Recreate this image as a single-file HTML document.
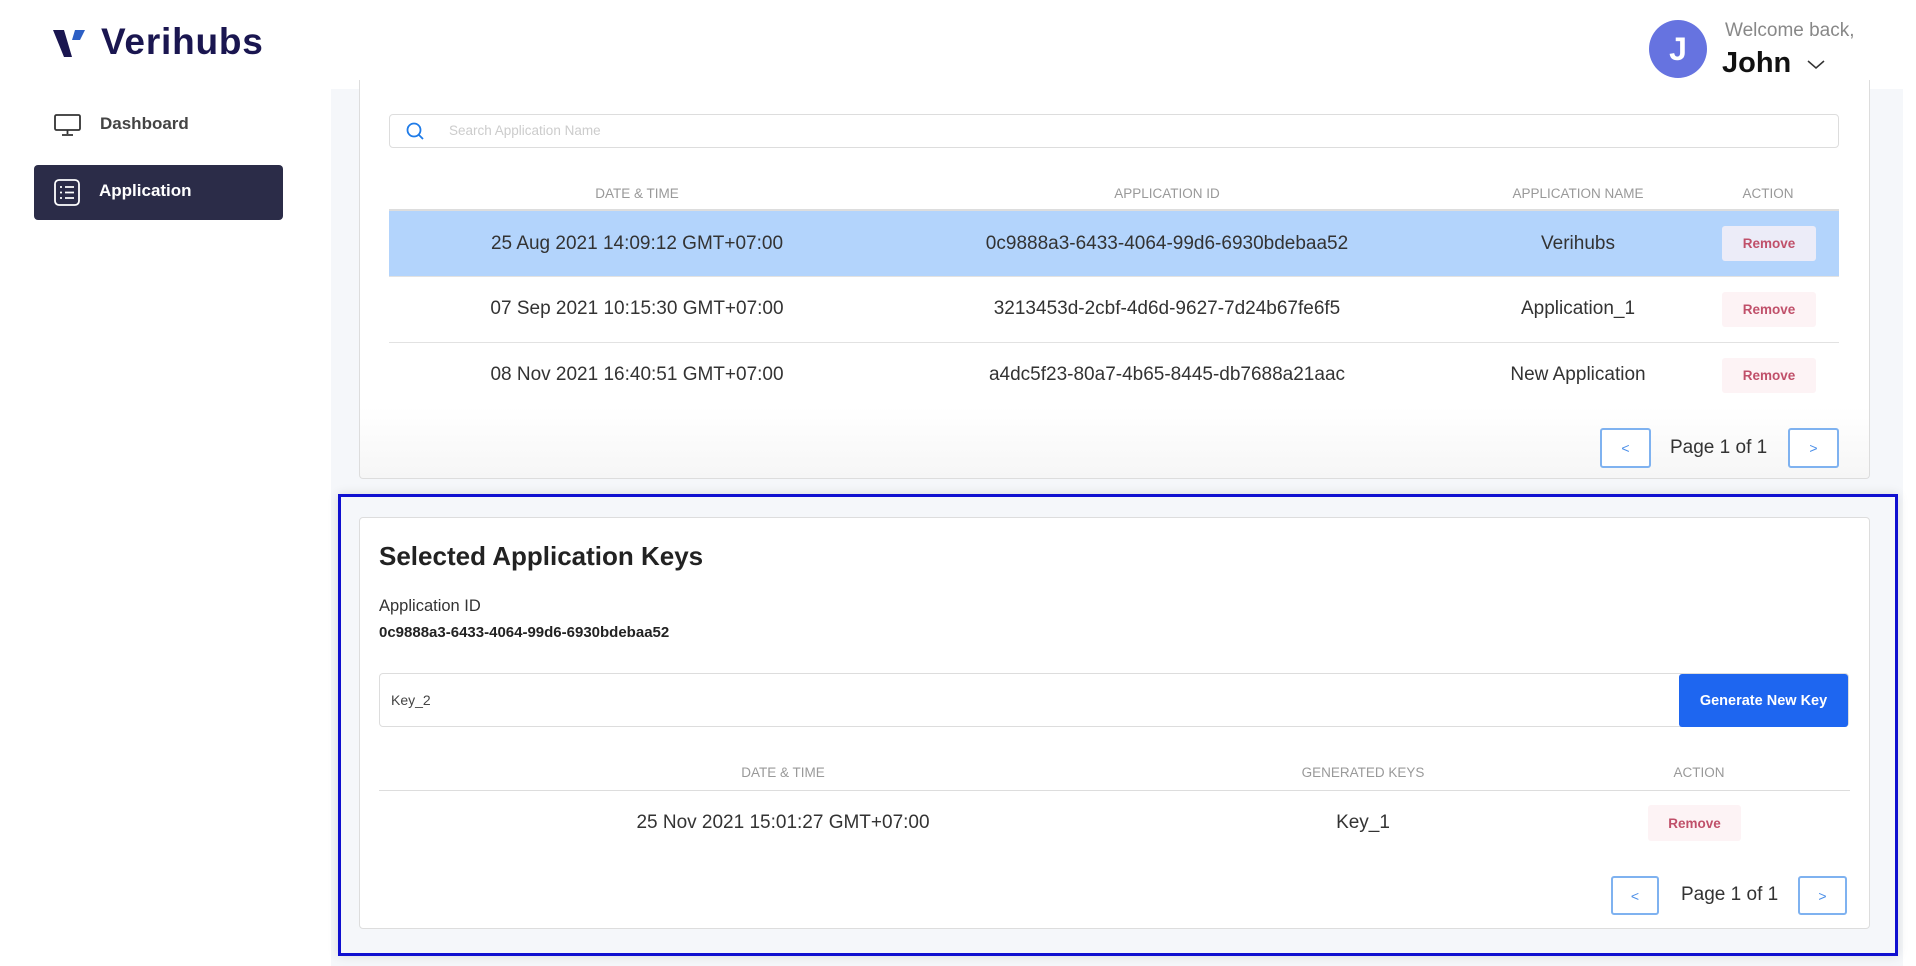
<!DOCTYPE html>
<html><head><meta charset="utf-8"><style>
*{box-sizing:border-box;margin:0;padding:0}
body{width:1916px;height:966px;background:#fff;font-family:"Liberation Sans",sans-serif;position:relative;overflow:hidden;color:#333}
.a{position:absolute}
.hdr{color:#999;font-size:13.5px;text-transform:uppercase;transform:translateX(-50%);white-space:nowrap}
.cell{font-size:19px;color:#333;transform:translateX(-50%);white-space:nowrap}
.rm{font-size:13.5px;color:#c0506a;font-weight:bold;display:flex;align-items:center;justify-content:center;border-radius:3px}
.pg{border:2px solid #7fb2f0;border-radius:3px;color:#4a8ee8;font-size:14px;display:flex;align-items:center;justify-content:center;background:#fff}
</style></head><body>
<svg class="a" style="left:53px;top:30px" width="34" height="29" viewBox="0 0 34 29"><path d="M0 0H11L19 27H11Z" fill="#1a1650"/><path d="M22 0H32L27 10H19Z" fill="#2d5fc4"/></svg>
<div class="a" style="left:101px;top:21px;font-size:37px;font-weight:bold;color:#1a1650;letter-spacing:0.8px">Verihubs</div>
<div class="a" style="left:1649px;top:20px;width:58px;height:58px;border-radius:50%;background:#6673e0;color:#fff;font-size:32px;font-weight:bold;display:flex;align-items:center;justify-content:center">J</div>
<div class="a" style="left:1725px;top:20px;font-size:19px;color:#888">Welcome back,</div>
<div class="a" style="left:1722px;top:47px;font-size:29px;font-weight:bold;color:#111">John</div>
<svg class="a" style="left:1806px;top:59px" width="20" height="12"><path d="M2 2L10 9L18 2" stroke="#333" stroke-width="1.5" fill="none"/></svg>
<svg class="a" style="left:54px;top:114px" width="27" height="22" viewBox="0 0 27 22"><rect x="1" y="1" width="25" height="15" rx="1.5" fill="none" stroke="#333" stroke-width="1.8"/><path d="M13.5 16V20M8 21H19" stroke="#333" stroke-width="1.8"/></svg>
<div class="a" style="left:100px;top:114px;font-size:17px;color:#444;font-weight:bold">Dashboard</div>
<div class="a" style="left:34px;top:165px;width:249px;height:55px;background:#2b2c48;border-radius:4px"></div>
<svg class="a" style="left:54px;top:179px" width="26" height="27" viewBox="0 0 26 27"><rect x="1" y="1" width="24" height="25" rx="4" fill="none" stroke="#fff" stroke-width="1.8"/><path d="M6 8H8M11 8H20M6 13.5H8M11 13.5H20M6 19H8M11 19H20" stroke="#fff" stroke-width="1.8"/></svg>
<div class="a" style="left:99px;top:181px;font-size:17px;color:#fff;font-weight:bold">Application</div>
<div class="a" style="left:331px;top:89px;width:1572px;height:877px;background:#f5f7fa"></div>
<div class="a" style="left:359px;top:80px;width:1511px;height:399px;background:linear-gradient(#fff 82%,#f6f6f6);border:1px solid #ddd;border-top:none;border-radius:0 0 4px 4px"></div>
<div class="a" style="left:389px;top:114px;width:1450px;height:34px;border:1px solid #ddd;border-radius:4px;background:#fff"></div>
<svg class="a" style="left:405px;top:121px" width="22" height="22" viewBox="0 0 22 22"><circle cx="9" cy="9" r="6.5" fill="none" stroke="#1e7be8" stroke-width="1.8"/><path d="M14 14L18 18" stroke="#1e7be8" stroke-width="1.8"/></svg>
<div class="a" style="left:449px;top:123px;font-size:13.5px;color:#ccc">Search Application Name</div>
<div class="a hdr" style="left:637px;top:186px">Date &amp; Time</div>
<div class="a hdr" style="left:1167px;top:186px">Application ID</div>
<div class="a hdr" style="left:1578px;top:186px">Application Name</div>
<div class="a hdr" style="left:1768px;top:186px">Action</div>
<div class="a" style="left:389px;top:209px;width:1450px;height:2px;background:#ddd"></div>
<div class="a" style="left:389px;top:211px;width:1450px;height:65px;background:#b3d4fc"></div>
<div class="a" style="left:389px;top:342px;width:1450px;height:1px;background:#e2e2e2"></div>
<div class="a" style="left:389px;top:276px;width:1450px;height:1px;background:#e2e2e2"></div>
<div class="a cell" style="left:637px;top:233px">25 Aug 2021 14:09:12 GMT+07:00</div>
<div class="a cell" style="left:1167px;top:233px">0c9888a3-6433-4064-99d6-6930bdebaa52</div>
<div class="a cell" style="left:1578px;top:233px">Verihubs</div>
<div class="a rm" style="left:1722px;top:226px;width:94px;height:35px;background:#ececf8">Remove</div>
<div class="a cell" style="left:637px;top:298px">07 Sep 2021 10:15:30 GMT+07:00</div>
<div class="a cell" style="left:1167px;top:298px">3213453d-2cbf-4d6d-9627-7d24b67fe6f5</div>
<div class="a cell" style="left:1578px;top:298px">Application_1</div>
<div class="a rm" style="left:1722px;top:292px;width:94px;height:35px;background:#fdf3f5">Remove</div>
<div class="a cell" style="left:637px;top:364px">08 Nov 2021 16:40:51 GMT+07:00</div>
<div class="a cell" style="left:1167px;top:364px">a4dc5f23-80a7-4b65-8445-db7688a21aac</div>
<div class="a cell" style="left:1578px;top:364px">New Application</div>
<div class="a rm" style="left:1722px;top:358px;width:94px;height:35px;background:#fdf3f5">Remove</div>
<div class="a pg" style="left:1600px;top:428px;width:51px;height:40px">&lt;</div>
<div class="a" style="left:1670px;top:437px;font-size:19px;color:#333">Page 1 of 1</div>
<div class="a pg" style="left:1788px;top:428px;width:51px;height:40px">&gt;</div>
<div class="a" style="left:338px;top:494px;width:1560px;height:462px;border:3px solid #1010d0;box-shadow:0 0 10px rgba(0,0,0,.12)"></div>
<div class="a" style="left:359px;top:517px;width:1511px;height:412px;background:#fff;border:1px solid #ddd;border-radius:4px"></div>
<div class="a" style="left:379px;top:541px;font-size:26px;font-weight:bold;color:#222">Selected Application Keys</div>
<div class="a" style="left:379px;top:597px;font-size:16.5px;color:#333">Application ID</div>
<div class="a" style="left:379px;top:624px;font-size:15px;font-weight:bold;color:#222">0c9888a3-6433-4064-99d6-6930bdebaa52</div>
<div class="a" style="left:379px;top:673px;width:1470px;height:54px;border:1px solid #ddd;border-radius:4px;background:#fff"></div>
<div class="a" style="left:391px;top:692px;font-size:14px;color:#444">Key_2</div>
<div class="a" style="left:1679px;top:674px;width:169px;height:53px;background:#1e66f0;border-radius:3px;color:#fff;font-weight:bold;font-size:14.5px;display:flex;align-items:center;justify-content:center">Generate New Key</div>
<div class="a hdr" style="left:783px;top:765px">Date &amp; Time</div>
<div class="a hdr" style="left:1363px;top:765px">Generated Keys</div>
<div class="a hdr" style="left:1699px;top:765px">Action</div>
<div class="a" style="left:379px;top:790px;width:1471px;height:1px;background:#ddd"></div>
<div class="a cell" style="left:783px;top:812px">25 Nov 2021 15:01:27 GMT+07:00</div>
<div class="a cell" style="left:1363px;top:812px">Key_1</div>
<div class="a rm" style="left:1648px;top:805px;width:93px;height:36px;background:#fdf3f5">Remove</div>
<div class="a pg" style="left:1611px;top:876px;width:48px;height:39px">&lt;</div>
<div class="a" style="left:1681px;top:884px;font-size:19px;color:#333">Page 1 of 1</div>
<div class="a pg" style="left:1798px;top:876px;width:49px;height:39px">&gt;</div>
</body></html>
